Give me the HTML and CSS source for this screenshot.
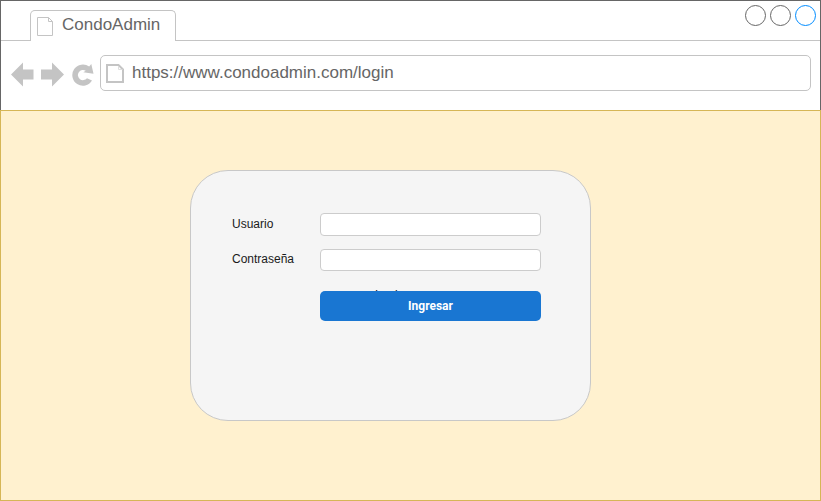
FILE: index.html
```html
<!DOCTYPE html>
<html lang="es">
<head>
<meta charset="utf-8">
<title>CondoAdmin</title>
<link rel="stylesheet" href="styles.css">
</head>
<body>
<div class="browser">
  <header class="chrome">
    <div class="tabs">
      <div class="tab-gap-left"></div>
      <div class="tab">
        <svg class="tab-icon" width="18" height="21" viewBox="0 0 18 21"><path d="M1.5 1.5h11l4 4v14h-15zM12.5 1.5v4h4" fill="none" stroke="#c4c4c4"/></svg>
        <span>CondoAdmin</span>
      </div>
      <div class="tab-gap-right">
        <i class="dot"></i><i class="dot"></i><i class="dot dot-active"></i>
      </div>
    </div>
    <div class="toolbar">
      <svg class="nav" width="86" height="26" viewBox="10 61 86 26" fill="#c4c4c4">
        <path d="M11 74.5L23 62.5V69.5H33.5V79.5H23V86.5Z"/>
        <path d="M64 74.5L52 62.5V69.5H41V79.5H52V86.5Z"/>
        <path d="M89.2 66.6A10.6 10.6 0 1 0 92 80.6L87 78.2A5.1 5.1 0 1 1 85.8 70.8L83.3 72.3L93.5 73.8L91.3 64Z"/>
      </svg>
      <div class="address">
        <svg width="19" height="21" viewBox="0 0 19 21"><path d="M1 2h11.5l4.5 4.5v12.5h-16z" fill="none" stroke="#c4c4c4" stroke-width="2"/><path d="M12.5 3v3.5h4" fill="none" stroke="#dedede"/></svg>
        <span>https://www.condoadmin.com/login</span>
      </div>
    </div>
  </header>
  <main class="page">
    <form class="card">
      <label class="first" for="user">Usuario</label>
      <input id="user" type="text">
      <label for="pass">Contraseña</label>
      <input id="pass" type="password">
      <div class="action">
        <span class="hidden-label">Login</span>
        <button type="button">Ingresar</button>
      </div>
    </form>
  </main>
</div>
</body>
</html>
```
FILE: styles.css
```css
* { box-sizing: border-box; }
body {
  margin: 0;
  background: #fff;
  font-family: "Liberation Sans", Arial, sans-serif;
  overflow: hidden;
}
.browser {
  width: 821px;
  height: 501px;
  display: flex;
  flex-direction: column;
}
.chrome {
  height: 110px;
  border: 1px solid #666;
  border-bottom: 0;
}
.tabs { display: flex; height: 40px; }
.tab-gap-left { width: 29px; border-bottom: 1px solid #c4c4c4; }
.tab {
  width: 146px;
  height: 31px;
  margin-top: 9px;
  border: 1px solid #c4c4c4;
  border-bottom: 0;
  border-radius: 5px 5px 0 0;
  display: flex;
  padding-left: 5px;
  font-size: 17px;
  line-height: 20px;
  color: #666;
}
.tab-icon { margin: 5px 8px 0 0; flex: none; }
.tab span { margin-top: 4px; }
.tab-gap-right {
  flex: 1;
  border-bottom: 1px solid #c4c4c4;
  display: flex;
  justify-content: flex-end;
  gap: 4px;
  padding: 4px 4px 0 0;
}
.dot {
  width: 21px;
  height: 21px;
  border: 1px solid #666;
  border-radius: 50%;
}
.dot-active { border-color: #008cff; }
.toolbar { display: flex; padding: 14px 9px 0 9px; }
.nav { margin: 6px 3px 0 0; flex: none; }
.address {
  flex: 1;
  height: 36px;
  margin-left: 1px;
  border: 1px solid #c4c4c4;
  border-radius: 5px;
  display: flex;
  align-items: center;
  gap: 7px;
  padding-left: 5px;
  font-size: 17px;
  line-height: 20px;
  color: #666;
}
.address span { margin-top: -1px; }
.page {
  flex: 1;
  background: #fff1cf;
  border: 1px solid #d6b656;
  padding: 59px 0 0 189px;
}
.card {
  width: 401px;
  height: 251px;
  background: #f5f5f5;
  border: 1px solid #c8c8c8;
  border-radius: 38px;
  padding: 42px 49px 0 41px;
  display: grid;
  grid-template-columns: 88px 221px;
  grid-template-rows: 22px 22px 30px;
  row-gap: 13.5px;
  align-content: start;
  font-size: 12px;
  color: #1a1a1a;
}
label { line-height: 21px; }
.first { line-height: 23px; }
input {
  width: 221px;
  height: 22.5px;
  border: 1px solid #ccc;
  border-radius: 4px;
  background: #fff;
  padding: 0 6px;
}
.action {
  grid-column: 2;
  position: relative;
  margin-top: 7px;
  height: 30px;
}
.hidden-label {
  position: absolute;
  left: 55px;
  top: -3px;
  line-height: 14px;
}
button {
  position: relative;
  display: block;
  width: 221px;
  height: 30px;
  border: 0;
  border-radius: 5px;
  background: #1976d2;
  color: #fff;
  padding: 0;
  font: bold 12px/30px Roboto, sans-serif;
}
```
